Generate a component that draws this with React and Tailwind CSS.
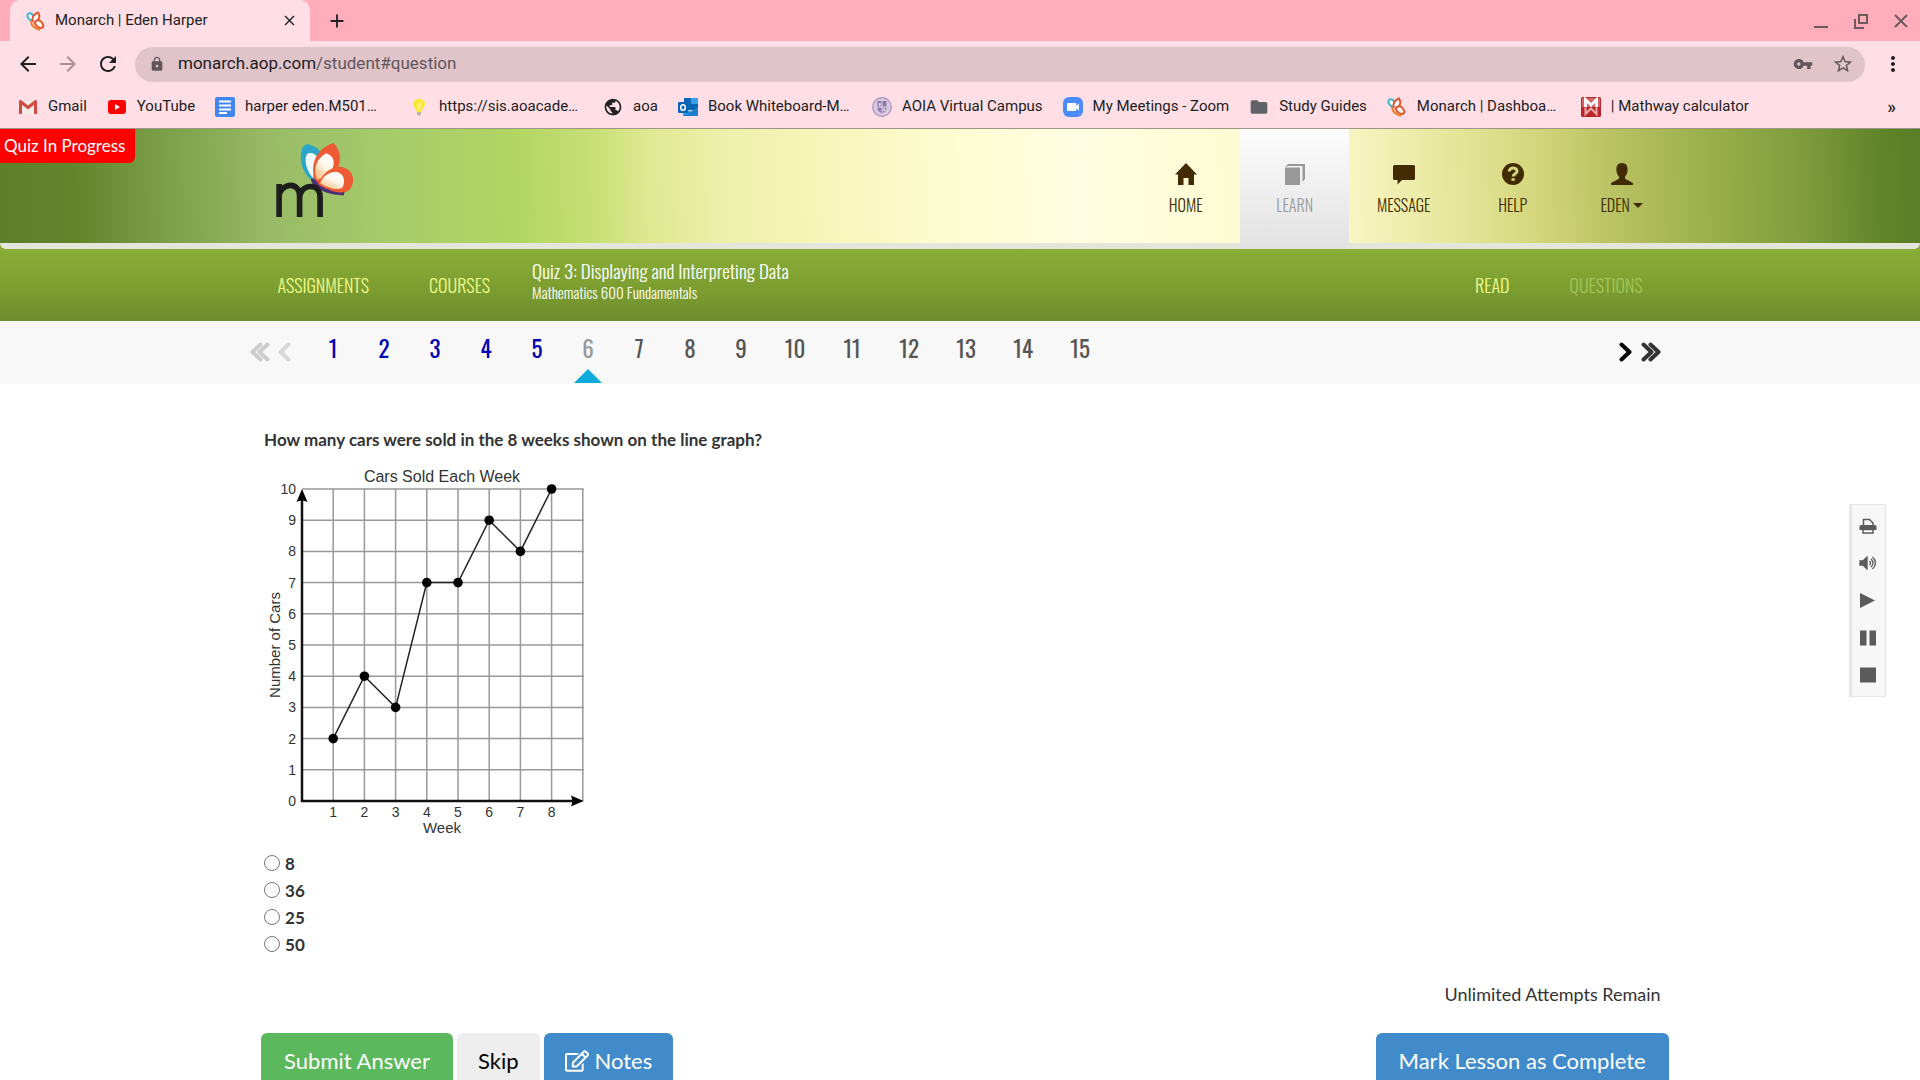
import {
  MdAdd,
  MdArrowBack,
  MdArrowForward,
  MdClose,
  MdFolder,
  MdLock,
  MdMoreVert,
  MdPublic,
  MdRefresh,
  MdStarBorder,
  MdVideocam,
  MdVpnKey,
} from "react-icons/md";
import { FaRegEdit } from "react-icons/fa";

const BOOKMARKS = [
  { icon: <GmailIcon />, label: "Gmail" },
  { icon: <YouTubeIcon />, label: "YouTube" },
  { icon: <DocsIcon />, label: "harper eden.M501…", wide: true },
  { icon: <BulbIcon />, label: "https://sis.aoacade…", wide: true },
  { icon: <MdPublic className="size-[22px] text-[#202124]" />, label: "aoa" },
  { icon: <OutlookIcon />, label: "Book Whiteboard-M…", wide: true },
  { icon: <CrestIcon />, label: "AOIA Virtual Campus" },
  { icon: <ZoomIcon />, label: "My Meetings - Zoom" },
  { icon: <MdFolder className="size-[22px] text-[#5f6368]" />, label: "Study Guides" },
  { icon: <ButterflyIcon />, label: "Monarch | Dashboa…", wide: true },
  { icon: <MathwayIcon />, label: "| Mathway calculator" },
];

const NAV = [
  { label: "HOME", icon: <HomeIcon /> },
  { label: "LEARN", icon: <BookIcon />, active: true },
  { label: "MESSAGE", icon: <CommentIcon /> },
  { label: "HELP", icon: <HelpIcon /> },
  { label: "EDEN", icon: <UserIcon />, caret: true },
];

const CARS = [2, 4, 3, 7, 7, 9, 8, 10];
const ANSWERS = ["8", "36", "25", "50"];
const QUESTION_COUNT = 15;
const CURRENT = 6;

/* ---------- icons ---------- */

function GmailIcon() {
  return (
    <svg viewBox="0 0 20 20" className="size-5">
      <path d="M2 4h16v13H2z" fill="#f3ece9" />
      <path d="M1 17V4.500C1 3 2.700 2.600 3.600 3.400L10 8.500l6.400-5.100C17.300 2.600 19 3 19 4.500V17h-3V7.800l-6 4.700-6-4.700V17z" fill="#cf4b43" />
    </svg>
  );
}

function YouTubeIcon() {
  return (
    <svg viewBox="0 0 20 20" className="size-5">
      <rect x="1" y="3" width="18" height="14" rx="3" fill="#f00" />
      <path d="M8 7v6l5-3z" fill="#fff" />
    </svg>
  );
}

function DocsIcon() {
  return (
    <svg viewBox="0 0 20 20" className="size-5">
      <rect width="20" height="20" rx="2" fill="#4285f4" />
      <path d="M4 4.500h12M4 8.500h12M4 12.500h12M4 16h8" stroke="#fff" strokeWidth="1.800" />
    </svg>
  );
}

function BulbIcon() {
  return (
    <svg viewBox="0 0 20 20" className="size-5">
      <path d="M10 2c4 0 6 2.500 6 5S13.500 11 12 15H8C6.500 11 4 9.500 4 7s2-5 6-5z" fill="#fbe82e" />
      <path d="M10 5c2 0 3 1.500 3 3l-2 5H9L8 8z" fill="#fff27a" />
      <path d="M8 15h4v2.500L10 19l-2-1.500z" fill="#b9b4a6" />
    </svg>
  );
}

function OutlookIcon() {
  return (
    <svg viewBox="0 0 20 20" className="size-5">
      <rect x="6" y="1" width="14" height="12" fill="#0a66b5" />
      <rect x="13" y="1" width="7" height="6" fill="#33a0e6" />
      <path d="M5 10l8 5 7-5v9H5z" fill="#2aa3ea" />
      <path d="M5 19l15-9v9z" fill="#1b80d4" />
      <rect y="5" width="10" height="11" rx="1" fill="#0a63b8" />
      <ellipse cx="5" cy="10.500" rx="2.300" ry="2.800" fill="none" stroke="#fff" strokeWidth="1.500" />
    </svg>
  );
}

function CrestIcon() {
  return (
    <svg viewBox="0 0 20 20" className="size-5">
      <circle cx="10" cy="10" r="9.300" fill="#d9c9e0" stroke="#a592bd" strokeWidth="1.200" />
      <path d="M5.500 4h9v7c0 2.500-2 4.500-4.500 5.500C7.500 15.500 5.500 13.500 5.500 11z" fill="#8d77aa" />
      <path d="M10 4v12M5.500 10h9" stroke="#e9def0" />
      <path d="M7 6h1.500v2.500H7zM11.500 11.500H13V14h-1.500z" fill="#fff" />
    </svg>
  );
}

function ZoomIcon() {
  return (
    <span className="flex size-5 items-center justify-center rounded-md bg-[#4a8cff]">
      <MdVideocam className="size-4 text-white" />
    </span>
  );
}

function MathwayIcon() {
  return (
    <svg viewBox="0 0 20 20" className="size-5">
      <rect width="20" height="20" rx="1.500" fill="#b8252b" />
      <rect x="1" y="1" width="18" height="9" fill="#cf6465" />
      <path d="M4.500 10V2.500L10 8l5.500-5.500V10" fill="none" stroke="#fff" strokeWidth="2.800" />
      <path d="M4.500 10.500V17L10 11.500l5.500 5.500v-6.500" fill="none" stroke="#eeaaaa" strokeWidth="2" />
    </svg>
  );
}

function ButterflyIcon() {
  return (
    <svg viewBox="0 0 20 20" className="size-5">
      <path d="M6 10C2 8 0 5 2.500 2.500 5 1.500 7 4 8 6" fill="#fff" stroke="#3fb3cf" strokeWidth="2" />
      <path d="M7 11C5 7 8 3 12 1.500c2.500 3.500 1.500 7-2 9.500" fill="#fff" stroke="#e4572e" strokeWidth="2" />
      <path d="M8.500 12c2-4 6-4 9 2.500-1 4-5 3.500-9-2.500z" fill="#fff" stroke="#e4572e" strokeWidth="2" />
      <path d="M5 10c0 5 4 7 9 9" fill="none" stroke="#e9812e" strokeWidth="2" />
    </svg>
  );
}

function MonarchLogo() {
  return (
    <svg viewBox="0 0 80 76" className="h-[78px] w-[82px]" role="img" aria-label="Monarch">
      <defs>
        <linearGradient id="wing" x1="0" y1="1" x2="0.600" y2="0">
          <stop offset="0" stopColor="#f8b06a" />
          <stop offset="0.600" stopColor="#fff6ea" />
          <stop offset="1" stopColor="#fff" />
        </linearGradient>
      </defs>
      <path d="M37 39C28 33 23 20 26 9c1-5 5-7 9-5 5 1 9 5 11 9L39 38z" fill="#2ba6c6" />
      <path d="M37 36c-6-7-9-17-6-23 3-3 8-1 11 3z" fill="#eef9fc" />
      <path d="M39 39C34 24 39 8 57 2c7 7 9 18 2 28L42 42z" fill="#ee5a33" />
      <path d="M41 38c-4-10-1-21 9-26 9 3 9 12 4 18-3 4-8 6-13 8z" fill="url(#wing)" />
      <path d="M35 37c4-1 6 3 9 6l24 6-1 4c-12 0-25-4-31-12z" fill="#4a3079" />
      <path d="M42 42c4-10 12-17 22-17 11 2 15 11 10 21-6 8-22 3-32-4z" fill="#ee5a33" />
      <path d="M44 41c3-7 9-11 16-11 7 2 9 8 6 15-5 4-15 1-22-4z" fill="url(#wing)" />
      <path d="M4 74V42M4 52c4-12 20-12 20 2v20M24 54c2-13 20-13 20 1v19" fill="none" stroke="#1d1d1b" strokeWidth="5.500" />
    </svg>
  );
}

function HomeIcon() {
  return (
    <svg viewBox="0 0 22 22" className="size-[22px]" fill="currentColor">
      <path d="M11 0l11 11.500h-3V22h-5.500v-7h-5v7H3V11.500H0z" />
    </svg>
  );
}

function BookIcon() {
  return (
    <svg viewBox="0 0 22 22" className="size-[22px]" fill="currentColor">
      <path d="M1 4.500h15V22H1z" />
      <path d="M1 4l3-3h17v15l-2.500 3V3H4.500z" />
    </svg>
  );
}

function CommentIcon() {
  return (
    <svg viewBox="0 0 22 22" className="size-[22px]" fill="currentColor">
      <path d="M1.500 2h19A1.500 1.500 0 0122 3.500v12a1.500 1.500 0 01-1.500 1.500H9l-4.500 4.500V17h-3A1.500 1.500 0 010 15.500v-12A1.500 1.500 0 011.500 2z" />
    </svg>
  );
}

function HelpIcon() {
  return (
    <svg viewBox="0 0 22 22" className="size-[22px]">
      <circle cx="11" cy="11" r="11" fill="currentColor" />
      <path d="M7.200 8.500C7.200 3.800 15 4 15 8.200c0 2.800-3.800 2.800-3.800 5.300" fill="none" stroke="#d3d680" strokeWidth="3" />
      <path d="M9.500 15.200h3.300v2.600H9.500z" fill="#d3d680" />
    </svg>
  );
}

function UserIcon() {
  return (
    <svg viewBox="0 0 22 22" className="size-[22px]" fill="currentColor">
      <path d="M11 0c4 0 5.600 2.800 5.600 6.500 0 3-1 5.500-2.600 7v2.300L22 20v2H0v-2l8-4.200v-2.300c-1.600-1.500-2.600-4-2.600-7C5.400 2.800 7 0 11 0z" />
    </svg>
  );
}

function Chevron({ count, flip, className }) {
  return (
    <svg
      viewBox={count === 2 ? "0 0 20 20" : "0 0 13 20"}
      className={`h-5 ${count === 2 ? "w-5" : "w-[13px]"} ${className}`}
      fill="none"
      stroke="currentColor"
      strokeWidth="4"
      strokeLinecap="round"
      strokeLinejoin="round"
    >
      <g transform={flip ? `translate(${count === 2 ? 20 : 13} 0) scale(-1 1)` : undefined}>
        <path d="M2.500 2.500L10.500 10l-8 7.500" />
        {count === 2 && <path d="M9.500 2.500L17.500 10l-8 7.500" />}
      </g>
    </svg>
  );
}

/* ---------- browser chrome ---------- */

function TabStrip() {
  return (
    <div className="flex h-[41px] justify-between bg-[#ffadbb] pl-[10px]">
      <div className="flex">
        <div className="flex w-[300px] items-center rounded-t-[10px] bg-[#ffdfe5] pr-3 pl-4">
          <ButterflyIcon />
          <span className="ml-[9px] flex-1 text-[15px] text-[#202124]">Monarch | Eden Harper</span>
          <button aria-label="Close tab">
            <MdClose className="size-[17px] text-[#202124]" />
          </button>
        </div>
        <button className="ml-4" aria-label="New tab">
          <MdAdd className="size-[22px] text-[#202124]" />
        </button>
      </div>
      <div className="flex items-center gap-[22px] pr-[10px] text-[#6b5a5f]">
        <button aria-label="Minimize">
          <svg viewBox="0 0 18 18" className="size-[18px]" stroke="currentColor" strokeWidth="2">
            <path d="M2 15h14" />
          </svg>
        </button>
        <button aria-label="Restore">
          <svg viewBox="0 0 18 18" className="size-[18px]" fill="none" stroke="currentColor" strokeWidth="2">
            <path d="M7 3h8v8H7zM3 7v9h9" />
          </svg>
        </button>
        <button aria-label="Close window">
          <svg viewBox="0 0 18 18" className="size-[18px]" stroke="currentColor" strokeWidth="2">
            <path d="M3 3l12 12M15 3L3 15" />
          </svg>
        </button>
      </div>
    </div>
  );
}

function Toolbar() {
  return (
    <div className="flex h-[46px] items-center bg-[#ffdfe5] pl-4 text-[#202124]">
      <button aria-label="Back"><MdArrowBack className="size-6" /></button>
      <button className="ml-4" aria-label="Forward"><MdArrowForward className="size-6 text-[#b08d94]" /></button>
      <button className="ml-4" aria-label="Reload"><MdRefresh className="size-6" /></button>
      <div className="ml-[15px] flex h-[35px] flex-1 items-center rounded-full bg-[#e0c4ca] pr-[11px] pl-[14px] text-[#5f555a]">
        <MdLock className="size-4" />
        <p className="ml-[13px] flex-1 text-[17px]">
          <span className="text-[#202124]">monarch.aop.com</span>/student#question
        </p>
        <MdVpnKey className="size-5" />
        <button className="ml-[19px]" aria-label="Bookmark"><MdStarBorder className="size-[22px]" /></button>
      </div>
      <button className="mr-[15px] ml-4" aria-label="Menu"><MdMoreVert className="size-6" /></button>
    </div>
  );
}

function BookmarksBar() {
  return (
    <div className="flex h-[42px] items-center border-b border-[#9b9688] bg-[#ffdfe5] pr-6 pb-[2px] pl-[18px] text-[15px] text-[#202124]">
      <div className="flex flex-1 gap-5">
        {BOOKMARKS.map((b) => (
          <a key={b.label} href="#" className="flex shrink-0 items-center gap-[10px]">
            <span className="flex w-5 shrink-0 justify-center">{b.icon}</span>
            <span className={b.wide ? "w-36 whitespace-nowrap" : ""}>{b.label}</span>
          </a>
        ))}
      </div>
      <button className="text-lg leading-5 font-medium" aria-label="More bookmarks">»</button>
    </div>
  );
}

/* ---------- page ---------- */

function SiteHeader() {
  return (
    <header className="relative flex h-[114px] justify-between bg-[linear-gradient(88deg,#5d7f29_0%,#62852c_4%,#7da04a_9%,#98ba67_14%,#a5cb6a_20%,#b2d663_27%,#c9de76_31%,#dfe992_34%,#eef0ad_38%,#f8f7bd_44%,#fdfcd2_50%,#fffee2_56%,#fcfbd2_65%,#f8f6c4_70%,#e9e8a0_75%,#d3d67b_80%,#b2be5d_85%,#96ab48_90%,#7e9b3b_94%,#5f8429_98%,#5a7e26_100%)] pr-[12.7%] pl-[12.8%] font-['Oswald',sans-serif]">
      <span className="absolute top-0 left-0 rounded-br-md bg-[#f00] pr-[10px] pl-1 font-['Lato',sans-serif] text-[17px] leading-[34px] text-white">
        Quiz In Progress
      </span>
      <a href="#" className="ml-[29px] pt-3"><MonarchLogo /></a>
      <nav className="flex h-[120px]">
        {NAV.map((item) => (
          <a
            key={item.label}
            href="#"
            className={`flex w-[109px] flex-col items-center pt-[34px] text-base leading-6 font-light ${
              item.active
                ? "z-10 bg-linear-to-b from-[#fcfcfc] to-[#e2e2e2] text-[#999]"
                : "text-[#422b00]"
            }`}
          >
            {item.icon}
            <span className="mt-2 flex items-center gap-[3px]">
              {item.label}
              {item.caret && <span className="border-x-[5px] border-t-[5px] border-x-transparent border-t-current" />}
            </span>
          </a>
        ))}
      </nav>
    </header>
  );
}

function LessonBar() {
  return (
    <div className="font-['Oswald',sans-serif] font-light">
      <div className="bg-[#88ad36]">
        <div className="h-[6px] rounded-b-md bg-[#e4e6dc]" />
      </div>
      <div className="flex h-[72px] items-center bg-linear-to-b from-[#8aae37] via-[#7d9f31] to-[#6f8d2d] px-[14.45%] text-lg text-[#f0fa8c]">
        <a href="#">ASSIGNMENTS</a>
        <a href="#" className="ml-[60px]">COURSES</a>
        <div className="ml-[42px] flex-1 pb-[10px] text-white">
          <h1 className="text-[19px] leading-6">Quiz 3: Displaying and Interpreting Data</h1>
          <p className="text-[15px] leading-5">Mathematics 600 Fundamentals</p>
        </div>
        <a href="#">READ</a>
        <a href="#" className="ml-[60px] text-[#a5c458]">QUESTIONS</a>
      </div>
    </div>
  );
}

function pageColor(n) {
  if (n === CURRENT) return "text-[#999]";
  return n < CURRENT ? "text-[#0000b4]" : "text-[#555]";
}

function QuestionPager() {
  const pages = Array.from({ length: QUESTION_COUNT }, (_, i) => i + 1);

  return (
    <nav className="flex h-[63px] bg-[#f8f8f8] pr-[13.5%] pl-[13%] font-['Oswald',sans-serif] text-[23px]">
      <button className="pb-[2px]" aria-label="First question"><Chevron count={2} flip className="text-[#ccc]" /></button>
      <button className="mr-[17px] ml-2 pb-[2px]" aria-label="Previous question"><Chevron count={1} flip className="text-[#d8d8d8]" /></button>
      <div className="flex flex-1">
        {pages.map((n) => (
          <a
            key={n}
            href="#"
            className={`flex flex-col items-center justify-between pt-[9px] leading-9 ${n < 10 ? "w-[51px]" : "w-[57px]"} ${pageColor(n)}`}
          >
            {n}
            {n === CURRENT && (
              <span className="mb-px border-x-[14px] border-b-[14px] border-x-transparent border-b-[#0cabd9]" />
            )}
          </a>
        ))}
      </div>
      <button className="pb-[2px]" aria-label="Next question"><Chevron count={1} className="text-black" /></button>
      <button className="ml-[9px] pb-[2px]" aria-label="Last question"><Chevron count={2} className="text-[#333]" /></button>
    </nav>
  );
}

function CarsChart() {
  const left = 38;
  const bottom = 337;
  const step = 31.2;
  const px = (week) => left + week * step;
  const py = (cars) => bottom - cars * step;
  const ticks = Array.from({ length: 11 }, (_, i) => i);
  const right = px(9) + 1;

  return (
    <svg
      viewBox="0 0 330 376"
      className="h-[376px] w-[330px] font-['Liberation_Sans',sans-serif]"
      role="img"
      aria-label="Line graph of cars sold each week"
      fill="#333"
      fontSize="14"
    >
      <text x="178" y="18" textAnchor="middle" fontSize="16">Cars Sold Each Week</text>
      <g stroke="#999" strokeWidth="1.500">
        {ticks.slice(1).map((n) => <path key={n} d={`M${left} ${py(n)}H${right}`} />)}
        {ticks.slice(1, 10).map((n) => <path key={n} d={`M${px(n)} ${py(10)}V${bottom}`} />)}
      </g>
      <path d={`M${left} ${py(10) + 6}V${bottom}H${right - 6}`} fill="none" stroke="#111" strokeWidth="2.500" />
      <path d={`M${left} ${py(10)}l5.500 13q-5.500-3-11 0z`} fill="#000" />
      <path d={`M${right} ${bottom}l-13 5.500q3-5.500 0-11z`} fill="#000" />
      <polyline
        points={CARS.map((cars, i) => `${px(i + 1)},${py(cars)}`).join(" ")}
        fill="none"
        stroke="#222"
        strokeWidth="1.500"
      />
      {CARS.map((cars, i) => <circle key={i} cx={px(i + 1)} cy={py(cars)} r="4.800" fill="#000" />)}
      {ticks.map((n) => <text key={n} x="32" y={py(n) + 5} textAnchor="end">{n}</text>)}
      {ticks.slice(1, 9).map((n) => <text key={n} x={px(n)} y="353" textAnchor="middle">{n}</text>)}
      <text x="178" y="369" textAnchor="middle" fontSize="15">Week</text>
      <text transform="translate(16 181) rotate(-90)" textAnchor="middle" fontSize="15">Number of Cars</text>
    </svg>
  );
}

function MediaTools() {
  return (
    <aside className="mt-[120px] flex h-[193px] w-[37px] flex-col items-center justify-between self-start border border-l-[3px] border-[#e6e6e6] bg-[#f7f7f7] py-3 pr-[2px] text-[#5b5b5b]">
      <button aria-label="Print">
        <svg viewBox="0 0 18 18" className="size-[18px]">
          <path d="M4.500 9V2.500h6L14 6v3" fill="none" stroke="currentColor" strokeWidth="1.500" />
          <path d="M2 8h14a1.500 1.500 0 011.500 1.500V13h-17V9.500A1.500 1.500 0 012 8z" fill="currentColor" />
          <path d="M4 12.500h10V16H4z" fill="#fff" stroke="currentColor" strokeWidth="1.500" />
        </svg>
      </button>
      <button aria-label="Read aloud">
        <svg viewBox="0 0 18 18" className="size-[18px]" fill="none" stroke="currentColor" strokeWidth="1.300">
          <path d="M1 7h3l4-4v12l-4-4H1z" fill="currentColor" />
          <path d="M10.500 7q2 2 0 4M12 5q4 4 0 8M13.500 3q6 6 0 12" />
        </svg>
      </button>
      <button aria-label="Play">
        <svg viewBox="0 0 18 18" className="size-[18px]" fill="currentColor"><path d="M1 1l15 7.500L1 16z" /></svg>
      </button>
      <button aria-label="Pause">
        <svg viewBox="0 0 18 18" className="size-[18px]" fill="currentColor"><path d="M1 1.500h6.500v15H1zM10.500 1.500H17v15h-6.500z" /></svg>
      </button>
      <button aria-label="Stop">
        <svg viewBox="0 0 18 18" className="size-[18px]" fill="currentColor"><path d="M1 1.500h16v15H1z" /></svg>
      </button>
    </aside>
  );
}

function Question() {
  return (
    <main className="flex bg-white pr-[34px] pl-[13.6%] font-['Lato',sans-serif] text-lg text-[#333]">
      <div className="flex-1 pt-10">
        <h2 className="pl-[3px] text-[17px] leading-8 font-bold">
          How many cars were sold in the 8 weeks shown on the line graph?
        </h2>
        <div className="mt-2 pl-[3px]"><CarsChart /></div>
        <form className="mt-[11px] flex flex-col items-start pl-[3px] text-[17px] font-bold">
          {ANSWERS.map((answer) => (
            <label key={answer} className="flex h-[27px] items-center gap-[5px]">
              <input
                type="radio"
                name="answer"
                value={answer}
                className="mb-1 size-4 appearance-none rounded-full border border-[#767676] bg-white checked:border-[5px]"
              />
              {answer}
            </label>
          ))}
        </form>
        <p className="mt-[19px] pr-2 text-right leading-8">Unlimited Attempts Remain</p>
        <div className="mt-[23px] flex gap-1 text-[22px] leading-8">
          <button className="rounded-md bg-[#5cb85c] px-[23px] py-3 text-white">Submit Answer</button>
          <button className="rounded-md bg-[#eee] px-[21px] py-3 text-black">Skip</button>
          <button className="flex items-center gap-[6px] rounded-md bg-[#428bca] px-[21px] py-3 text-white">
            <FaRegEdit className="size-6" />
            Notes
          </button>
          <button className="ml-auto rounded-md bg-[#428bca] px-[23px] py-3 text-white">Mark Lesson as Complete</button>
        </div>
      </div>
      <div className="w-[11.1%] shrink-0" />
      <MediaTools />
    </main>
  );
}

export default function App() {
  return (
    <div className="h-screen overflow-hidden bg-white font-['Roboto',sans-serif]">
      <TabStrip />
      <Toolbar />
      <BookmarksBar />
      <SiteHeader />
      <LessonBar />
      <QuestionPager />
      <Question />
    </div>
  );
}
